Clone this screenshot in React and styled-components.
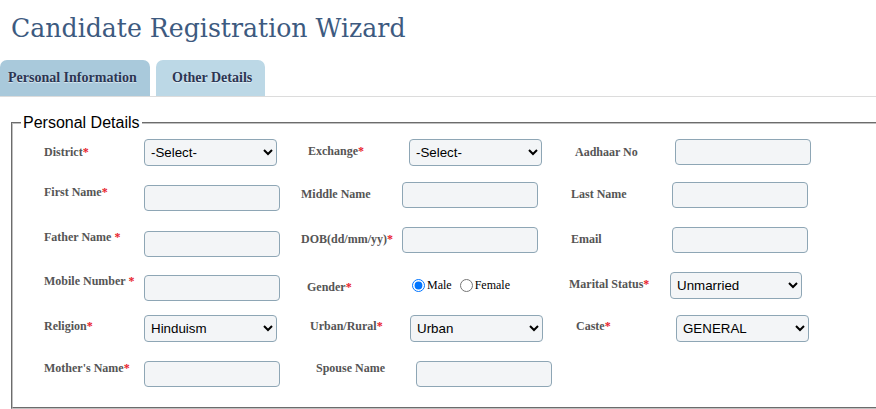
import styled, { createGlobalStyle } from "styled-components";

const GlobalStyle = createGlobalStyle`
    body {
        margin: 0;
        background: #fff;
        overflow: hidden;
        font-family: "Liberation Serif", serif;
    }
`
const Page = styled.div`
    width: 876px;
`
const Title = styled.h1`
    margin: 14px 0 17px 11px;
    font-family: "DejaVu Serif", serif;
    font-weight: normal;
    font-size: 25.2px;
    line-height: normal;
    color: #3d5a80;
`
const TabBar = styled.div`
    display: flex;
    gap: 6px;
    border-bottom: 1px solid #dcdcdc;
`
const Tab = styled.div`
    height: 36px;
    line-height: 36px;
    width: ${props => props.$width}px;
    padding-left: ${props => props.$pad}px;
    box-sizing: border-box;
    border-radius: 7px 7px 0 0;
    background: ${props => props.$active ? '#a9c9db' : '#bcd8e6'};
    font-family: "Liberation Serif", serif;
    font-weight: bold;
    font-size: 14px;
    color: #2b3653;
    text-shadow: 0 1px 1px rgba(255,255,255,.6);
    white-space: nowrap;
`
const Fieldset = styled.fieldset`
    margin: 17px 0 0 11px;
    width: 900px;
    padding: 7px 0 20px 8px;
    border: 2px groove #c0c0c0;
`
const Legend = styled.legend`
    padding: 0 2px;
    font-family: "Liberation Sans", Arial, sans-serif;
    font-size: 16px;
    color: #000;
`
const Form = styled.div`
    padding-left: 23px;
`
const Row = styled.div`
    display: grid;
    grid-template-columns: ${props => props.$cols};
    align-items: start;
    height: ${props => props.$h}px;
`
const Label = styled.label`
    margin-top: ${props => props.$top ?? 5}px;
    font-family: "Liberation Serif", serif;
    font-weight: bold;
    font-size: 12px;
    line-height: 14px;
    color: #555;
    white-space: nowrap;
`
const Star = styled.span`
    color: #e8202a;
`
const Input = styled.input`
    display: block;
    margin: ${props => props.$top ?? 0}px 0 0;
    width: 136px;
    height: 26px;
    box-sizing: border-box;
    border: 1px solid #8ea6b5;
    border-radius: 4px;
    background: #f3f5f7;
`
const Select = styled.select`
    display: block;
    margin: 0;
    width: ${props => props.$w ?? 133}px;
    height: 27px;
    box-sizing: border-box;
    padding: 0 2px;
    border: 1px solid #8ea6b5;
    border-radius: 4px;
    background-color: #f3f5f7;
    font-family: "Liberation Sans", Arial, sans-serif;
    font-size: 13.33px;
    color: #000;
`
const RadioGroup = styled.div`
    display: flex;
    align-items: center;
    margin-top: ${props => props.$top}px;
    font-family: "Liberation Serif", serif;
    font-size: 12px;
    color: #000;
`
const RadioOption = styled.label`
    display: flex;
    align-items: center;
    margin-right: 8px;
`
const Radio = styled.input`
    width: 13px;
    height: 13px;
    margin: 0 2px 0 0;
`

const Req = ({ children, top, space }) => (
    <Label $top={top}>{children}{space ? " " : ""}<Star>*</Star></Label>
)

const App = () => {
  return (
      <Page>
          <GlobalStyle />
          <Title>Candidate Registration Wizard</Title>
          <TabBar>
              <Tab $active $width={150} $pad={8}>Personal Information</Tab>
              <Tab $width={109} $pad={16}>Other Details</Tab>
          </TabBar>

          <Fieldset>
              <Legend>Personal Details</Legend>
              <Form>
                  <Row $h={43} $cols="100px 164px 101px 166px 100px auto">
                      <Req top={6}>District</Req>
                      <Select defaultValue="s"><option value="s">-Select-</option></Select>
                      <Req top={5}>Exchange</Req>
                      <Select defaultValue="s"><option value="s">-Select-</option></Select>
                      <Label $top={6}>Aadhaar No</Label>
                      <Input />
                  </Row>

                  <Row $h={45} $cols="100px 157px 101px 169px 101px auto">
                      <Req top={3}>First Name</Req>
                      <Input $top={3} />
                      <Label $top={5}>Middle Name</Label>
                      <Input />
                      <Label $top={5}>Last Name</Label>
                      <Input />
                  </Row>

                  <Row $h={45} $cols="100px 157px 101px 169px 101px auto">
                      <Req top={3} space>Father Name</Req>
                      <Input $top={4} />
                      <Req top={5}>DOB(dd/mm/yy)</Req>
                      <Input />
                      <Label $top={5}>Email</Label>
                      <Input />
                  </Row>

                  <Row $h={43} $cols="100px 163px 105px 157px 101px auto">
                      <Req top={2} space>Mobile Number</Req>
                      <Input $top={3} />
                      <Req top={8}>Gender</Req>
                      <RadioGroup $top={6}>
                          <RadioOption><Radio type="radio" name="gender" defaultChecked />Male</RadioOption>
                          <RadioOption><Radio type="radio" name="gender" />Female</RadioOption>
                      </RadioGroup>
                      <Req top={5}>Marital Status</Req>
                      <Select $w={132} defaultValue="u"><option value="u">Unmarried</option></Select>
                  </Row>

                  <Row $h={46} $cols="100px 166px 100px 166px 100px auto">
                      <Req top={4}>Religion</Req>
                      <Select defaultValue="h"><option value="h">Hinduism</option></Select>
                      <Req top={4}>Urban/Rural</Req>
                      <Select defaultValue="u"><option value="u">Urban</option></Select>
                      <Req top={4}>Caste</Req>
                      <Select defaultValue="g"><option value="g">GENERAL</option></Select>
                  </Row>

                  <Row $h={26} $cols="100px 172px 100px auto">
                      <Req top={0}>Mother's Name</Req>
                      <Input />
                      <Label $top={0}>Spouse Name</Label>
                      <Input />
                  </Row>
              </Form>
          </Fieldset>
      </Page>
  );
};

export default App;
